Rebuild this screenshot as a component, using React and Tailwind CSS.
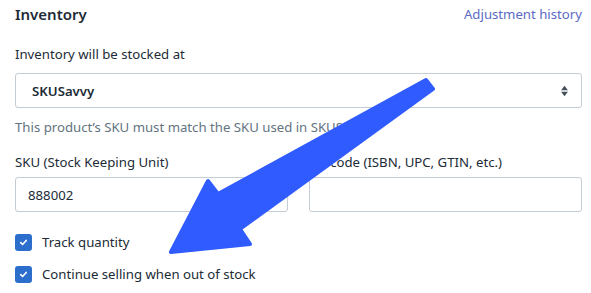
import React from 'react';

// Checkbox marcado no estilo Polaris
const Checked = () => (
  <span className="flex h-[17px] w-[17px] items-center justify-center rounded-[3px] bg-[#2c6ecb]">
    <svg viewBox="0 0 12 12" className="h-[11px] w-[11px]" fill="none" stroke="white" strokeWidth="1.8" strokeLinecap="round" strokeLinejoin="round">
      <path d="M3 6.2l2 2 4-4.4" />
    </svg>
  </span>
);

const App = () => {
  return (
    <div className="relative h-[293px] w-[591px] overflow-hidden bg-white pl-[15px] pr-[9px] text-[13.2px] leading-[20px] text-[#212b36]" style={{ fontFamily: '"Noto Sans", "Open Sans", sans-serif' }}>
      {/* Cabeçalho */}
      <div className="flex items-center justify-between pt-[4px]">
        <h2 className="text-[15px] font-semibold leading-[20px]">Inventory</h2>
        <a className="text-[#5c6ac4]">Adjustment history</a>
      </div>

      {/* Local de estoque */}
      <div className="mt-[20px]">Inventory will be stocked at</div>
      <div className="mt-[9px] flex h-[35px] items-center justify-between rounded-[3px] border border-[#c4cdd5] pl-[16px] pr-[12px]">
        <span className="font-semibold">SKUSavvy</span>
        <svg viewBox="0 0 10 14" className="h-[12px] w-[9px]" fill="#454f5b">
          <path d="M5 1l4 5H1zM5 13l4-5H1z" />
        </svg>
      </div>
      <p className="mt-[9px] text-[#637381]">This product’s SKU must match the SKU used in SKUSavvy.</p>

      {/* SKU e código de barras */}
      <div className="mt-[15px] grid grid-cols-2 gap-x-[21px]">
        <div>
          <div>SKU (Stock Keeping Unit)</div>
          <div className="mt-[5px] flex h-[35px] items-center rounded-[3px] border border-[#c4cdd5] px-[12px]">888002</div>
        </div>
        <div>
          <div>Barcode (ISBN, UPC, GTIN, etc.)</div>
          <div className="mt-[5px] h-[35px] rounded-[3px] border border-[#c4cdd5]" />
        </div>
      </div>

      {/* Opções */}
      <div className="mt-[20px] flex flex-col gap-[12px]">
        <label className="flex items-center gap-[10px]"><Checked />Track quantity</label>
        <label className="flex items-center gap-[10px]"><Checked />Continue selling when out of stock</label>
      </div>

      {/* Seta de anotação sobreposta */}
      <svg className="pointer-events-none absolute left-0 top-0" width="591" height="293" viewBox="0 0 591 293">
        <path
          d="M426 80 L218 194 L208 181 L171 252 L250 244 L240 229 L433 89 Z"
          fill="#2f5bff"
          stroke="#2f5bff"
          strokeWidth="4"
          strokeLinejoin="round"
        />
      </svg>
    </div>
  );
};

export default App;
